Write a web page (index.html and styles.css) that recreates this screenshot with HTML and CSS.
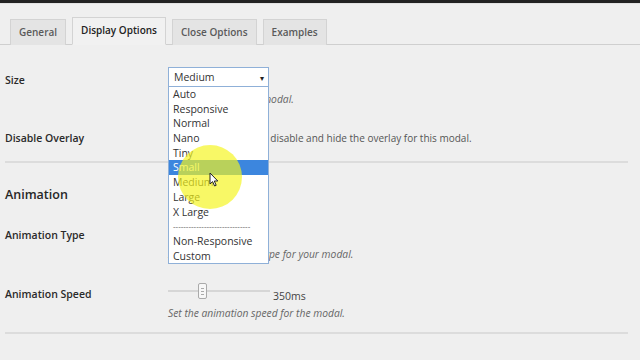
FILE: index.html
```html
<!DOCTYPE html>
<html>
<head>
<meta charset="utf-8">
<link rel="stylesheet" href="styles.css">
</head>
<body>
<div class="topbar"></div>
<div class="tabs">
  <div class="tab">General</div>
  <div class="tab active">Display Options</div>
  <div class="tab">Close Options</div>
  <div class="tab">Examples</div>
</div>

<div class="form">
  <div class="row row-size">
    <div class="label">Size</div>
    <div class="field">
      <div class="select"><span>Medium</span><span class="arrow">&#9662;</span></div>
      <div class="desc">Select the size of the modal.</div>
    </div>
  </div>

  <div class="row row-overlay">
    <div class="label">Disable Overlay</div>
    <div class="field inline">
      <span class="checkbox"></span>
      <span class="plain">Checking this will disable and hide the overlay for this modal.</span>
    </div>
  </div>

  <hr class="sep sep1">

  <h3 class="heading">Animation</h3>

  <div class="row row-type">
    <div class="label">Animation Type</div>
    <div class="field">
      <div class="select"><span>Fade</span><span class="arrow">&#9662;</span></div>
      <div class="desc">Select an animation type for your modal.</div>
    </div>
  </div>

  <div class="row row-speed">
    <div class="label">Animation Speed</div>
    <div class="field">
      <div class="slider-line">
        <div class="slider">
          <div class="track"></div>
          <div class="thumb"><i></i><i></i><i></i></div>
        </div>
        <span class="value">350ms</span>
      </div>
      <div class="desc">Set the animation speed for the modal.</div>
    </div>
  </div>

  <hr class="sep sep2">
</div>

<ul class="dropdown">
  <li>Auto</li>
  <li>Responsive</li>
  <li>Normal</li>
  <li>Nano</li>
  <li>Tiny</li>
  <li class="selected">Small</li>
  <li>Medium</li>
  <li>Large</li>
  <li>X Large</li>
  <li class="dashes">------------------------------</li>
  <li>Non-Responsive</li>
  <li>Custom</li>
</ul>

<div class="highlight"></div>
<svg class="cursor" width="10" height="15" viewBox="0 0 10 15">
  <path d="M1 1 L1 12 L3.6 9.6 L5.6 14 L7.2 13.3 L5.3 9 L8.8 9 Z" fill="#fff" stroke="#222" stroke-width="1" stroke-linejoin="round"/>
</svg>
</body>
</html>
```

FILE: styles.css
```css
html, body {
  margin: 0;
  padding: 0;
}
body {
  background: #efefef;
  font-family: "Open Sans", "DejaVu Sans", sans-serif;
  color: #222;
  width: 640px;
  height: 360px;
  overflow: hidden;
  position: relative;
}
.topbar {
  height: 3px;
  background: #232323;
  border-bottom: 1px solid #e2e2e2;
}
.tabs {
  display: flex;
  gap: 6px;
  margin-top: 13px;
  padding-left: 10px;
  border-bottom: 1px solid #cfcfcf;
  height: 27px;
  align-items: flex-end;
}
.tab {
  height: 25px;
  line-height: 25px;
  padding: 0 8px;
  border: 1px solid #d3d3d3;
  border-bottom: none;
  background: #e4e4e4;
  font-size: 10px;
  font-weight: 600;
  color: #5a5a5a;
  margin-bottom: -1px;
  box-sizing: content-box;
}
.tab.active {
  background: #f1f1f1;
  color: #222;
  height: 26px;
  border-bottom: 1px solid #f1f1f1;
}
.form {
  padding: 0 12px 0 5px;
}
.row {
  display: grid;
  grid-template-columns: 163px 1fr;
}
.label {
  font-size: 10.5px;
  font-weight: 600;
  color: #2a2a2a;
}
.row-size {
  margin-top: 22px;
  height: 55px;
}
.row-size .label {
  margin-top: 6px;
}
.select {
  height: 18px;
  border: 1px solid #8fb0d8;
  background: #fff;
  font-size: 10.5px;
  color: #333;
  display: flex;
  justify-content: space-between;
  align-items: center;
  padding: 0 0 0 5px;
  box-sizing: content-box;
  width: 94px;
}
.select .arrow {
  font-size: 8px;
  color: #222;
  margin-right: 4px;
}
.desc {
  font-size: 10.3px;
  font-style: italic;
  color: #666;
  margin-top: 5px;
}
.row-overlay {
  height: 32px;
  align-items: center;
}
.field.inline {
  display: flex;
  align-items: center;
  gap: 6px;
}
.checkbox {
  width: 12px;
  height: 12px;
  border: 1px solid #bbb;
  background: #fff;
  display: inline-block;
}
.plain {
  font-size: 10px;
  color: #555;
}
.sep {
  border: none;
  border-top: 2px solid #dcdcdc;
  margin: 0;
}
.sep1 {
  margin-top: 7px;
}
.heading {
  font-size: 12.5px;
  font-weight: 600;
  margin: 23px 0 0 0;
  line-height: 18px;
  color: #262626;
}
.row-type {
  margin-top: 20px;
  height: 57px;
}
.row-type .label {
  margin-top: 4px;
}
.row-type .desc {
  margin-top: 3px;
}
.row-speed {
  height: 43px;
}
.row-speed .label {
  margin-top: 6px;
}
.slider-line {
  display: flex;
  align-items: flex-end;
  height: 22px;
}
.slider {
  position: relative;
  width: 102px;
  height: 20px;
}
.track {
  position: absolute;
  left: 0;
  right: 0;
  top: 7px;
  height: 2px;
  background: #d6d6d6;
}
.thumb {
  position: absolute;
  left: 30px;
  top: 0;
  width: 7px;
  height: 14px;
  background: #f7f7f7;
  border: 1px solid #aaa;
  border-radius: 2px;
  display: flex;
  flex-direction: column;
  align-items: center;
  justify-content: center;
  gap: 2px;
}
.thumb i {
  display: block;
  width: 3px;
  height: 1px;
  background: #aaa;
}
.value {
  font-size: 10.5px;
  color: #444;
  margin-left: 3px;
  line-height: 14px;
}
.row-speed .desc {
  margin-top: 3px;
}
.sep2 {
  margin-top: 8px;
}
.dropdown {
  position: absolute;
  left: 168px;
  top: 87px;
  width: 99px;
  margin: 0;
  padding: 0;
  list-style: none;
  background: #fff;
  border: 1px solid #8fb0d8;
  border-top: none;
}
.dropdown li {
  height: 14.7px;
  line-height: 14.7px;
  font-size: 10.5px;
  color: #333;
  padding-left: 4px;
  white-space: nowrap;
  overflow: hidden;
}
.dropdown li.selected {
  background: #3c86de;
  color: #fff;
}
.dropdown li.dashes {
  letter-spacing: 0;
  font-size: 8px;
  color: #555;
}
.highlight {
  position: absolute;
  left: 178px;
  top: 145px;
  width: 64px;
  height: 64px;
  border-radius: 50%;
  background: rgba(245, 245, 30, 0.68);
}
.cursor {
  position: absolute;
  left: 209px;
  top: 172px;
}
```
